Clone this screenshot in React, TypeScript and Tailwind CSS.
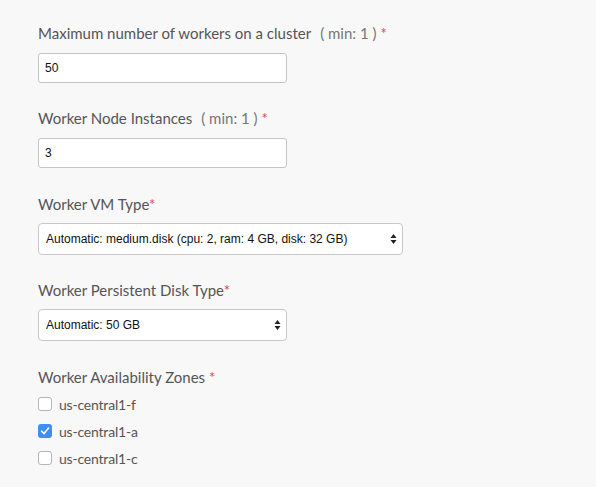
import { useState } from "react";

const zones = [
  { id: "us-central1-f", checked: false },
  { id: "us-central1-a", checked: true },
  { id: "us-central1-c", checked: false },
];

function Label({ text, min, tight }: { text: string; min?: string; tight?: boolean }) {
  return (
    <div className="h-[20px] text-[15px] leading-[20px] text-[#555]">
      {text}
      {min ? <span className="ml-[9px] text-[#777]">( min: {min} )</span> : null}
      <span className={`text-[#e0474c] ${tight ? "" : "ml-[4px]"}`}>*</span>
    </div>
  );
}

function SelectArrows() {
  return (
    <svg width="7" height="12" viewBox="0 0 7 12" className="absolute right-[5px] top-1/2 -translate-y-1/2">
      <path d="M3.5 1 L6.5 5 L0.5 5 Z" fill="#222" />
      <path d="M3.5 11 L6.5 7 L0.5 7 Z" fill="#222" />
    </svg>
  );
}

function FakeSelect({ value, width }: { value: string; width: string }) {
  return (
    <div
      className={`relative mt-[9px] flex h-[32px] ${width} items-center rounded-[4px] border border-[#c8c8c8] bg-white pl-[7px] text-[12px] font-medium text-[#111]`}
      style={{ fontFamily: '"Liberation Sans", Arial, sans-serif' }}
    >
      {value}
      <SelectArrows />
    </div>
  );
}

export default function App() {
  const [vals, setVals] = useState({ max: "50", nodes: "3" });
  const [checked, setChecked] = useState(zones.map((z) => z.checked));

  return (
    <div
      className="h-[487px] w-[596px] overflow-hidden bg-[#f8f8f8] pl-[38px] pt-[23px]"
      style={{ fontFamily: 'Lato, "Noto Sans", sans-serif' }}
    >
      <Label text="Maximum number of workers on a cluster" min="1" />
      <input
        value={vals.max}
        onChange={(e) => setVals({ ...vals, max: e.target.value })}
        className="mt-[10px] block h-[30px] w-[249px] rounded-[3px] border border-[#c4c4c4] bg-white px-[6px] text-[12px] font-medium text-[#111] outline-none"
        style={{ fontFamily: '"Liberation Sans", Arial, sans-serif' }}
      />

      <div className="mt-[25px]">
        <Label text="Worker Node Instances" min="1" />
      </div>
      <input
        value={vals.nodes}
        onChange={(e) => setVals({ ...vals, nodes: e.target.value })}
        className="mt-[10px] block h-[30px] w-[249px] rounded-[3px] border border-[#c4c4c4] bg-white px-[6px] text-[12px] font-medium text-[#111] outline-none"
        style={{ fontFamily: '"Liberation Sans", Arial, sans-serif' }}
      />

      <div className="mt-[26px]">
        <Label text="Worker VM Type" tight />
      </div>
      <FakeSelect value="Automatic: medium.disk (cpu: 2, ram: 4 GB, disk: 32 GB)" width="w-[365px]" />

      <div className="mt-[25px]">
        <Label text="Worker Persistent Disk Type" tight />
      </div>
      <FakeSelect value="Automatic: 50 GB" width="w-[249px]" />

      <div className="mt-[26px]">
        <Label text="Worker Availability Zones" />
      </div>
      <div className="mt-[8px] flex flex-col gap-[9px]">
        {zones.map((z, i) => (
          <label
            key={z.id}
            className="flex h-[18px] cursor-pointer items-center gap-[7px] text-[14px] tracking-[-0.2px] text-[#555]"
            onClick={() => setChecked(checked.map((c, j) => (j === i ? !c : c)))}
          >
            {checked[i] ? (
              <span className="flex h-[14px] w-[14px] items-center justify-center rounded-[3px] bg-[#3d8ef7]">
                <svg width="10" height="10" viewBox="0 0 10 10">
                  <path d="M1.5 5.2 L4 7.6 L8.6 2" fill="none" stroke="#fff" strokeWidth="1.6" strokeLinecap="round" strokeLinejoin="round" />
                </svg>
              </span>
            ) : (
              <span className="h-[14px] w-[14px] rounded-[3px] border border-[#b5b5b5] bg-white" />
            )}
            {z.id}
          </label>
        ))}
      </div>
    </div>
  );
}
